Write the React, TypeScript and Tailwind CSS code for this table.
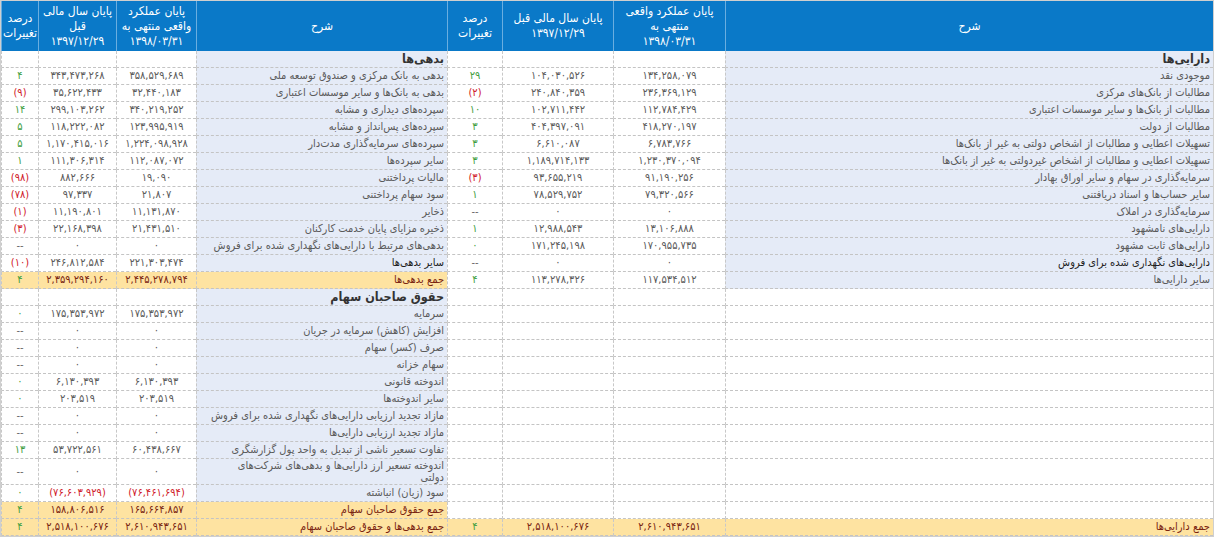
import React from "react";

type Line = { label?: string; cur?: string; prev?: string; pct?: string; kind?: "head" | "total" | "strong" | "tall" | "blank" };

const LEFT: Line[] = [
  { label: "بدهی‌ها", kind: "head" },
  { label: "بدهی به بانک مرکزی و صندوق توسعه ملی", cur: "۳۵۸,۵۲۹,۶۸۹", prev: "۳۴۳,۴۷۳,۲۶۸", pct: "۴" },
  { label: "بدهی به بانک‌ها و سایر موسسات اعتباری", cur: "۳۲,۴۴۰,۱۸۳", prev: "۳۵,۶۲۲,۴۳۳", pct: "(۹)" },
  { label: "سپرده‌های دیداری و مشابه", cur: "۳۴۰,۲۱۹,۲۵۲", prev: "۲۹۹,۱۰۳,۲۶۲", pct: "۱۴" },
  { label: "سپرده‌های پس‌انداز و مشابه", cur: "۱۲۳,۹۹۵,۹۱۹", prev: "۱۱۸,۲۲۲,۰۸۲", pct: "۵" },
  { label: "سپرده‌های سرمایه‌گذاری مدت‌دار", cur: "۱,۲۲۴,۰۹۸,۹۲۸", prev: "۱,۱۷۰,۴۱۵,۰۱۶", pct: "۵" },
  { label: "سایر سپرده‌ها", cur: "۱۱۲,۰۸۷,۰۷۲", prev: "۱۱۱,۳۰۶,۳۱۴", pct: "۱" },
  { label: "مالیات پرداختنی", cur: "۱۹,۰۹۰", prev: "۸۸۲,۶۶۶", pct: "(۹۸)" },
  { label: "سود سهام پرداختنی", cur: "۲۱,۸۰۷", prev: "۹۷,۳۳۷", pct: "(۷۸)" },
  { label: "ذخایر", cur: "۱۱,۱۳۱,۸۷۰", prev: "۱۱,۱۹۰,۸۰۱", pct: "(۱)" },
  { label: "ذخیره مزایای پایان خدمت کارکنان", cur: "۲۱,۴۳۱,۵۱۰", prev: "۲۲,۱۶۸,۳۹۸", pct: "(۳)" },
  { label: "بدهی‌های مرتبط با دارایی‌های نگهداری شده برای فروش", cur: "۰", prev: "۰", pct: "--" },
  { label: "سایر بدهی‌ها", cur: "۲۲۱,۳۰۳,۴۷۴", prev: "۲۴۶,۸۱۲,۵۸۴", pct: "(۱۰)", kind: "strong" },
  { label: "جمع بدهی‌ها", cur: "۲,۴۴۵,۲۷۸,۷۹۴", prev: "۲,۳۵۹,۲۹۴,۱۶۰", pct: "۴", kind: "total" },
  { label: "حقوق صاحبان سهام", kind: "head" },
  { label: "سرمایه", cur: "۱۷۵,۳۵۳,۹۷۲", prev: "۱۷۵,۳۵۳,۹۷۲", pct: "۰" },
  { label: "افزایش (کاهش) سرمایه در جریان", cur: "۰", prev: "۰", pct: "--" },
  { label: "صرف (کسر) سهام", cur: "۰", prev: "۰", pct: "--" },
  { label: "سهام خزانه", cur: "۰", prev: "۰", pct: "--" },
  { label: "اندوخته قانونی", cur: "۶,۱۳۰,۳۹۳", prev: "۶,۱۳۰,۳۹۳", pct: "۰" },
  { label: "سایر اندوخته‌ها", cur: "۲۰۳,۵۱۹", prev: "۲۰۳,۵۱۹", pct: "۰" },
  { label: "مازاد تجدید ارزیابی دارایی‌های نگهداری شده برای فروش", cur: "۰", prev: "۰", pct: "--" },
  { label: "مازاد تجدید ارزیابی دارایی‌ها", cur: "۰", prev: "۰", pct: "--" },
  { label: "تفاوت تسعیر ناشی از تبدیل به واحد پول گزارشگری", cur: "۶۰,۴۳۸,۶۶۷", prev: "۵۳,۷۲۲,۵۶۱", pct: "۱۳" },
  { label: "اندوخته تسعیر ارز دارایی‌ها و بدهی‌های شرکت‌های\nدولتی", cur: "۰", prev: "۰", pct: "--", kind: "tall" },
  { label: "سود (زیان) انباشته", cur: "(۷۶,۴۶۱,۶۹۴)", prev: "(۷۶,۶۰۳,۹۲۹)", pct: "۰" },
  { label: "جمع حقوق صاحبان سهام", cur: "۱۶۵,۶۶۴,۸۵۷", prev: "۱۵۸,۸۰۶,۵۱۶", pct: "۴", kind: "total" },
  { label: "جمع بدهی‌ها و حقوق صاحبان سهام", cur: "۲,۶۱۰,۹۴۳,۶۵۱", prev: "۲,۵۱۸,۱۰۰,۶۷۶", pct: "۴", kind: "total" },
];

const RIGHT: Line[] = [
  { label: "دارایی‌ها", kind: "head" },
  { label: "موجودی نقد", cur: "۱۳۴,۲۵۸,۰۷۹", prev: "۱۰۴,۰۳۰,۵۲۶", pct: "۲۹" },
  { label: "مطالبات از بانک‌های مرکزی", cur: "۲۳۶,۳۶۹,۱۲۹", prev: "۲۴۰,۸۴۰,۳۵۹", pct: "(۲)" },
  { label: "مطالبات از بانک‌ها و سایر موسسات اعتباری", cur: "۱۱۲,۷۸۴,۴۲۹", prev: "۱۰۲,۷۱۱,۴۴۲", pct: "۱۰" },
  { label: "مطالبات از دولت", cur: "۴۱۸,۲۷۰,۱۹۷", prev: "۴۰۴,۳۹۷,۰۹۱", pct: "۳" },
  { label: "تسهیلات اعطایی و مطالبات از اشخاص دولتی به غیر از بانک‌ها", cur: "۶,۷۸۳,۷۶۶", prev: "۶,۶۱۰,۰۸۷", pct: "۳" },
  { label: "تسهیلات اعطایی و مطالبات از اشخاص غیردولتی به غیر از بانک‌ها", cur: "۱,۲۳۰,۳۷۰,۰۹۴", prev: "۱,۱۸۹,۷۱۴,۱۳۳", pct: "۳" },
  { label: "سرمایه‌گذاری در سهام و سایر اوراق بهادار", cur: "۹۱,۱۹۰,۲۵۶", prev: "۹۳,۶۵۵,۲۱۹", pct: "(۳)" },
  { label: "سایر حساب‌ها و اسناد دریافتنی", cur: "۷۹,۳۲۰,۵۶۶", prev: "۷۸,۵۲۹,۷۵۲", pct: "۱" },
  { label: "سرمایه‌گذاری در املاک", cur: "۰", prev: "۰", pct: "--" },
  { label: "دارایی‌های نامشهود", cur: "۱۳,۱۰۶,۸۸۸", prev: "۱۲,۹۸۸,۵۴۳", pct: "۱" },
  { label: "دارایی‌های ثابت مشهود", cur: "۱۷۰,۹۵۵,۷۳۵", prev: "۱۷۱,۲۴۵,۱۹۸", pct: "۰" },
  { label: "دارایی‌های نگهداری شده برای فروش", cur: "۰", prev: "۰", pct: "--", kind: "strong" },
  { label: "سایر دارایی‌ها", cur: "۱۱۷,۵۳۴,۵۱۲", prev: "۱۱۳,۲۷۸,۳۲۶", pct: "۴" },
  ...Array.from({ length: 13 }, () => ({ kind: "blank" as const })),
  { label: "جمع دارایی‌ها", cur: "۲,۶۱۰,۹۴۳,۶۵۱", prev: "۲,۵۱۸,۱۰۰,۶۷۶", pct: "۴", kind: "total" },
];

const cell = "border-b border-dashed border-b-[#c4c4c4] border-l border-l-[#c8c8c8] p-0 align-middle";

function pctColor(p?: string) {
  if (!p) return "";
  if (p === "--") return "text-[#666]";
  if (p.startsWith("(")) return "text-[#d0202a]";
  return "text-[#3f9e3f]";
}

function Half({ line, tall }: { line: Line; tall: boolean }) {
  const h = tall ? "h-[26px]" : "h-[17px]";
  const total = line.kind === "total";
  const blank = line.kind === "blank";
  const numBg = total ? "bg-[#fee3a1]" : "bg-white";
  const labelBg = total ? "bg-[#fee3a1]" : blank ? "bg-white" : "bg-[#e5ebf7]";
  const labelText =
    line.kind === "head"
      ? "text-[12.5px] font-bold text-[#333]"
      : total
      ? "text-[#7a2410]"
      : line.kind === "strong"
      ? "text-[#1e1e1e]"
      : "text-[#5a5a5a]";
  const wrap = line.kind === "tall" ? "whitespace-pre-line leading-[12px]" : "whitespace-nowrap overflow-hidden leading-[16px]";
  const numText = total ? "text-[#7a2410]" : line.cur?.startsWith("(") ? "text-[#d0202a]" : "text-[#5a5a5a]";
  return (
    <>
      <td className={`${cell} ${h} ${labelBg} ${labelText} ${wrap} px-[3px] text-right`}>{line.label}</td>
      <td className={`${cell} ${h} ${numBg} ${numText} whitespace-nowrap text-center leading-[16px]`}>{line.cur}</td>
      <td className={`${cell} ${h} ${numBg} ${numText} whitespace-nowrap text-center leading-[16px]`}>{line.prev}</td>
      <td className={`${cell} ${h} ${numBg} ${pctColor(line.pct)} whitespace-nowrap text-center leading-[16px]`}>{line.pct}</td>
    </>
  );
}

function HeadCells({ cur, prev, pct }: { cur: string[]; prev: string[]; pct: string[] }) {
  const th = "border-l border-l-[#6aaee0] p-0 font-normal text-center align-middle leading-[15px]";
  return (
    <>
      <th className={th}>شرح</th>
      <th className={th}>{cur.map((t) => <div key={t}>{t}</div>)}</th>
      <th className={th}>{prev.map((t) => <div key={t}>{t}</div>)}</th>
      <th className={th}>{pct.map((t) => <div key={t}>{t}</div>)}</th>
    </>
  );
}

export default function App() {
  return (
    <div className="bg-white p-0" style={{ fontFamily: '"DejaVu Sans Condensed", "DejaVu Sans", sans-serif' }}>
      <table
        dir="rtl"
        className="w-[1214px] table-fixed border-separate border-spacing-0 border border-[#cfcfcf] text-[11px]"
      >
        <colgroup>
          <col className="w-[488px]" />
          <col className="w-[112px]" />
          <col className="w-[111px]" />
          <col className="w-[55px]" />
          <col className="w-[251px]" />
          <col className="w-[80px]" />
          <col className="w-[78px]" />
          <col className="w-[37px]" />
        </colgroup>
        <thead>
          <tr className="h-[50px] bg-[#0a79c8] text-[12px] text-white">
            <HeadCells
              cur={["پایان عملکرد واقعی", "منتهی به", "۱۳۹۸/۰۳/۳۱"]}
              prev={["پایان سال مالی قبل", "۱۳۹۷/۱۲/۲۹"]}
              pct={["درصد", "تغییرات"]}
            />
            <HeadCells
              cur={["پایان عملکرد", "واقعی منتهی به", "۱۳۹۸/۰۳/۳۱"]}
              prev={["پایان سال مالی", "قبل", "۱۳۹۷/۱۲/۲۹"]}
              pct={["درصد", "تغییرات"]}
            />
          </tr>
        </thead>
        <tbody>
          {LEFT.map((l, i) => {
            const tall = l.kind === "tall";
            return (
              <tr key={i}>
                <Half line={RIGHT[i]} tall={tall} />
                <Half line={l} tall={tall} />
              </tr>
            );
          })}
        </tbody>
      </table>
    </div>
  );
}
